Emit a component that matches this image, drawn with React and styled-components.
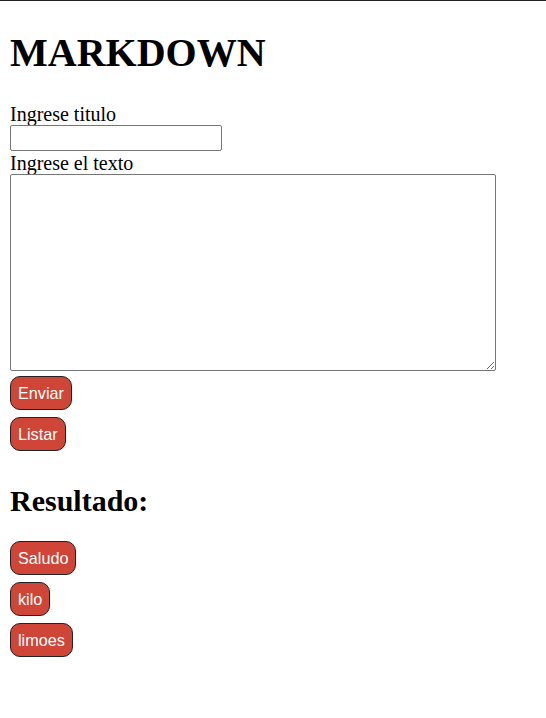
import React, { useState } from 'react'
import styled, { createGlobalStyle } from 'styled-components'

const GlobalStyle = createGlobalStyle`
html{
  border-top:1px solid #1e2124;
}
body{
  margin:0 10px 10px;
  font-family:"Liberation Serif", "Times New Roman", serif;
  font-size:20px;
  color:#000;
  background:#fff;
}
`;

const Title = styled.h1`
font-size:40px;
font-weight:bold;
margin:28px 0 27px;
`;

const Form = styled.div`
display:flex;
flex-direction:column;
align-items:flex-start;
`;

const Label = styled.label`
display:block;
font-size:20px;
line-height:22px;
`;

const TitleInput = styled.input`
box-sizing:border-box;
width:212px;
height:26px;
margin:0 0 1px;
border:1px solid #767676;
border-radius:2px;
`;

const TextArea = styled.textarea`
box-sizing:border-box;
width:486px;
height:197px;
margin:0;
border:1px solid #767676;
border-radius:2px;
`;

const Button = styled.button`
box-sizing:border-box;
height:34px;
padding:0 7px;
margin-top:${p => p.$top || 7}px;
background:#cf4537;
color:#fff;
border:1px solid #222;
border-radius:10px;
font-family:"Liberation Sans", Arial, sans-serif;
font-size:16.2px;
cursor:pointer;
`;

const Subtitle = styled.h2`
font-size:30px;
font-weight:bold;
margin:33px 0 16px;
line-height:34px;
`;

const List = styled.div`
display:flex;
flex-direction:column;
align-items:flex-start;
`;

export default function App() {
  const [titulo, setTitulo] = useState('');
  const [texto, setTexto] = useState('');
  const notas = ['Saludo', 'kilo', 'limoes'];

  return (
    <>
      <GlobalStyle />
      <Title>MARKDOWN</Title>
      <Form>
        <Label>Ingrese titulo</Label>
        <TitleInput value={titulo} onChange={e => setTitulo(e.target.value)} />
        <Label>Ingrese el texto</Label>
        <TextArea value={texto} onChange={e => setTexto(e.target.value)} />
        <Button $top={5}>Enviar</Button>
        <Button>Listar</Button>
      </Form>
      <Subtitle>Resultado:</Subtitle>
      <List>
        {notas.map((n, i) => (
          <Button key={n} $top={i === 0 ? 0 : 7}>{n}</Button>
        ))}
      </List>
    </>
  )
}
